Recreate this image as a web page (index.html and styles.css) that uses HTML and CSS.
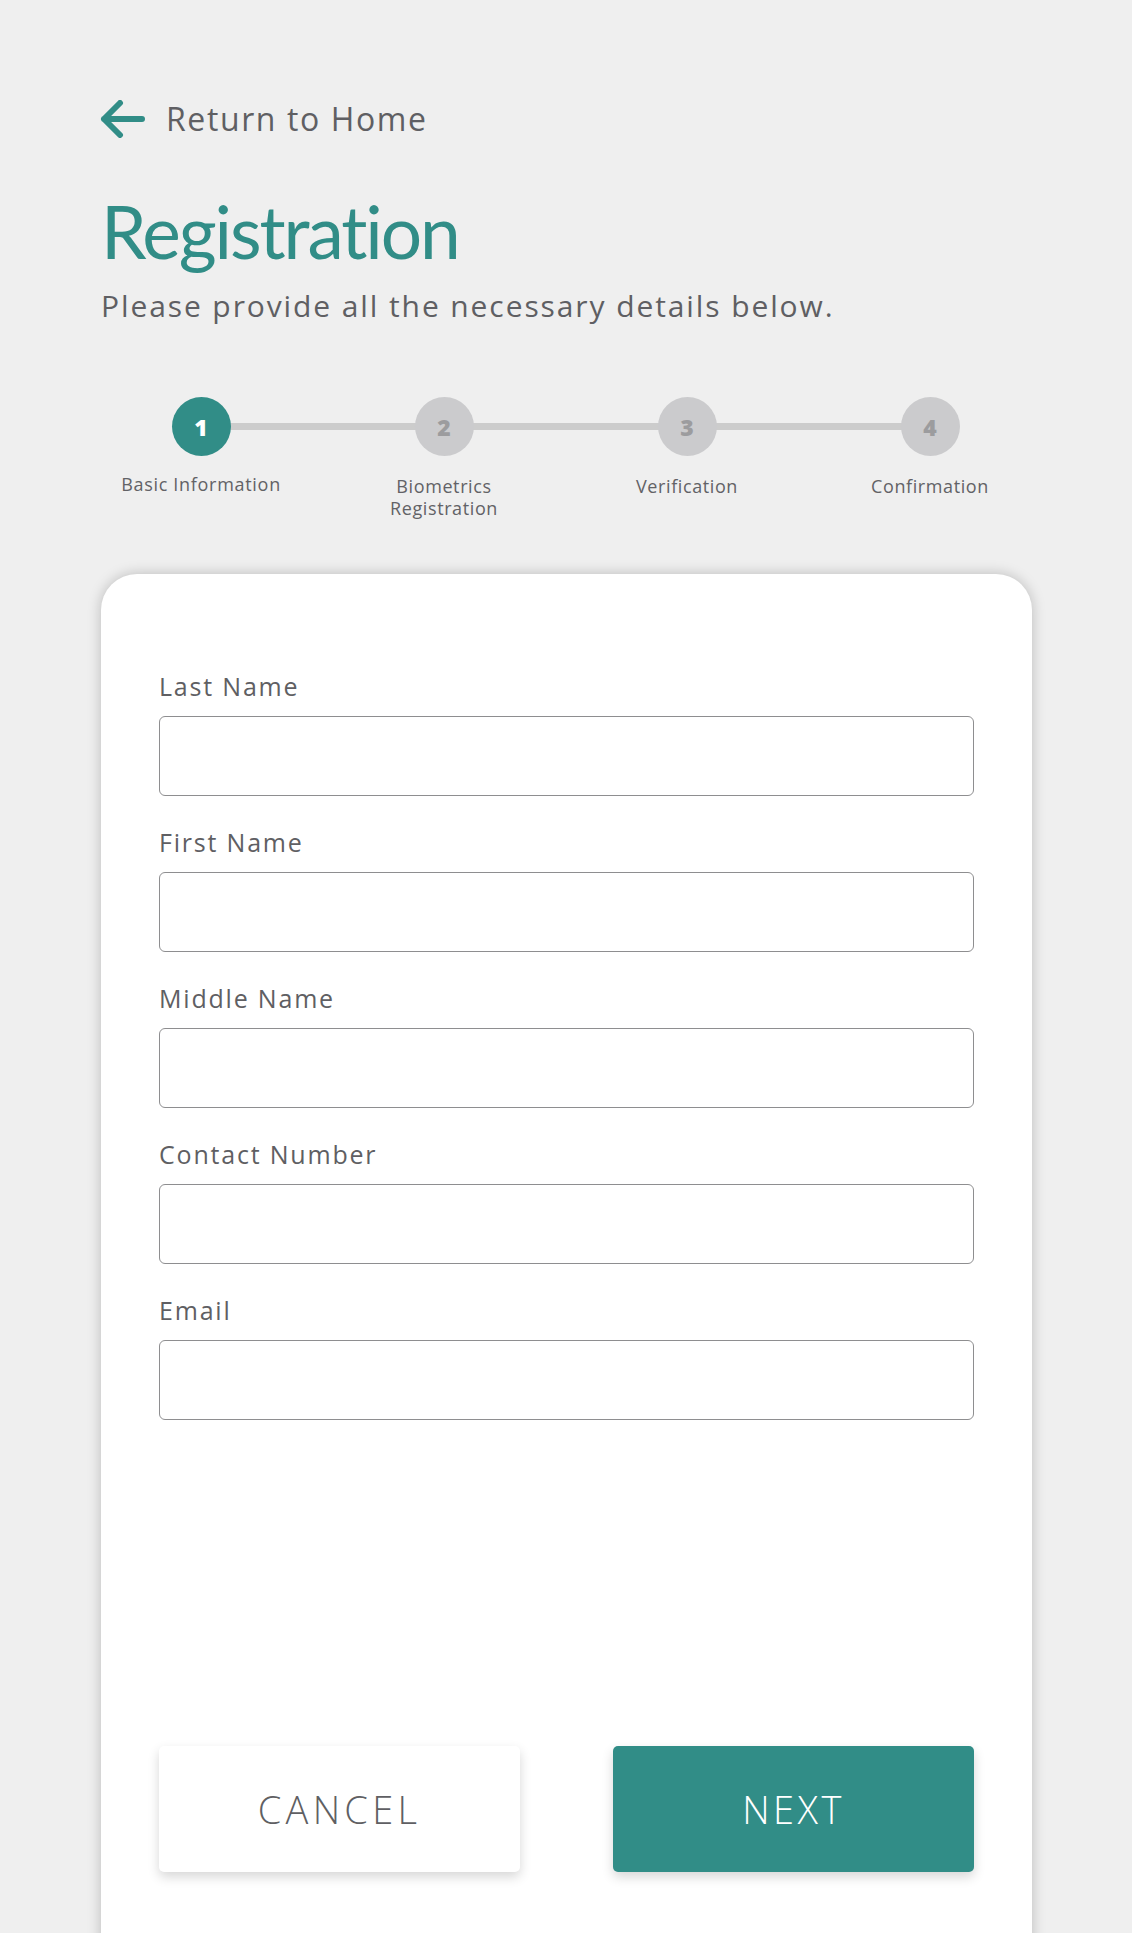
FILE: index.html
```html
<!DOCTYPE html>
<html lang="en">
<head>
<meta charset="utf-8">
<title>Registration</title>
<link rel="stylesheet" href="styles.css">
</head>
<body>
<div class="page">
  <a class="back" href="#">
    <svg class="back-icon" width="45" height="38" viewBox="0 0 45 38" aria-hidden="true">
      <path d="M42 19H4M20 3L4 19L20 35" fill="none" stroke="#318d87" stroke-width="6" stroke-linecap="round" stroke-linejoin="round"/>
    </svg>
    <span>Return to Home</span>
  </a>
  <h1 class="title">Registration</h1>
  <p class="subtitle">Please provide all the necessary details below.</p>

  <ol class="stepper">
    <li class="step active"><span class="dot">1</span><span class="step-label">Basic Information</span></li>
    <li class="step"><span class="dot">2</span><span class="step-label">Biometrics<br>Registration</span></li>
    <li class="step"><span class="dot">3</span><span class="step-label">Verification</span></li>
    <li class="step last"><span class="dot">4</span><span class="step-label">Confirmation</span></li>
  </ol>

  <section class="card">
    <form class="form">
      <div class="field"><label class="label">Last Name</label><input class="input" type="text"></div>
      <div class="field"><label class="label">First Name</label><input class="input" type="text"></div>
      <div class="field"><label class="label">Middle Name</label><input class="input" type="text"></div>
      <div class="field"><label class="label">Contact Number</label><input class="input" type="text"></div>
      <div class="field"><label class="label">Email</label><input class="input" type="text"></div>
      <div class="actions">
        <button type="button" class="btn btn-cancel">CANCEL</button>
        <button type="button" class="btn btn-next">NEXT</button>
      </div>
    </form>
  </section>
</div>
</body>
</html>
```

FILE: styles.css
```css
* { box-sizing: border-box; }

html, body {
  margin: 0;
  background: #efefef;
}

body {
  font-family: "Open Sans", "Noto Sans", sans-serif;
  color: #5f5f63;
}

.page {
  height: 100vh;
  overflow: hidden;
  padding: 100px 100px 0 101px;
  display: flex;
  flex-direction: column;
}

.back {
  display: flex;
  align-items: center;
  gap: 21px;
  height: 38px;
  color: #5f5f63;
  text-decoration: none;
  font-size: 32px;
  line-height: 38px;
  letter-spacing: 1.6px;
}

.back-icon { flex: none; display: block; margin-left: -1px; }

.title {
  margin: 57px 0 0;
  font-family: "Lato", sans-serif;
  font-weight: 400;
  font-size: 73px;
  line-height: 73px;
  letter-spacing: -2.1px;
  color: #318d87;
}

.subtitle {
  margin: 20px 0 0;
  font-size: 30px;
  line-height: 36px;
  letter-spacing: 1.9px;
}

.stepper {
  list-style: none;
  margin: 73px 0 0;
  padding: 0;
  display: grid;
  grid-template-columns: repeat(4, 200px);
  column-gap: 43px;
  height: 122px;
}

.step {
  position: relative;
  display: flex;
  flex-direction: column;
  align-items: center;
}

.step::after {
  content: "";
  position: absolute;
  left: 50%;
  top: 26px;
  width: 243px;
  height: 7px;
  background: #cccccc;
  z-index: 0;
}

.step.last::after { display: none; }

.dot {
  position: relative;
  z-index: 1;
  width: 59px;
  height: 59px;
  border-radius: 50%;
  background: #cbcbcd;
  color: #9c9c9e;
  display: flex;
  align-items: center;
  justify-content: center;
  font-family: "Open Sans", sans-serif;
  font-weight: 800;
  font-size: 23px;
}

.active .dot {
  background: #318d87;
  color: #ffffff;
}

.step-label {
  margin-top: 19px;
  font-size: 18px;
  line-height: 22px;
  text-align: center;
  color: #626266;
  letter-spacing: 0.6px;
  white-space: nowrap;
}

.active .step-label {
  margin-top: 17px;
  letter-spacing: 0.7px;
}

.card {
  margin-top: 55px;
  flex: none;
  background: #ffffff;
  border-radius: 36px 36px 0 0;
  box-shadow: 0 0 14px rgba(0, 0, 0, 0.22);
  padding: 97px 58px 200px;
}

.form {
  display: flex;
  flex-direction: column;
}

.field {
  display: flex;
  flex-direction: column;
  margin-bottom: 31px;
}

.label {
  font-size: 25px;
  line-height: 30px;
  letter-spacing: 1.8px;
  color: #5f5f63;
  margin-bottom: 15px;
}

.input {
  height: 80px;
  width: 100%;
  border: 1px solid #8e8e90;
  border-radius: 6px;
  background: #ffffff;
  font: inherit;
}

.actions {
  margin-top: 295px;
  display: flex;
  gap: 93px;
}

.btn {
  flex: 1;
  height: 126px;
  border: none;
  border-radius: 5px;
  font-family: "Open Sans", sans-serif;
  font-weight: 300;
  font-size: 38px;
  letter-spacing: 4.3px;
  box-shadow: 0 5px 12px rgba(0, 0, 0, 0.16);
  cursor: pointer;
}

.btn-cancel {
  background: #ffffff;
  color: #5f5f63;
}

.btn-next {
  background: #318d87;
  color: #ffffff;
  letter-spacing: 3.5px;
}
```
